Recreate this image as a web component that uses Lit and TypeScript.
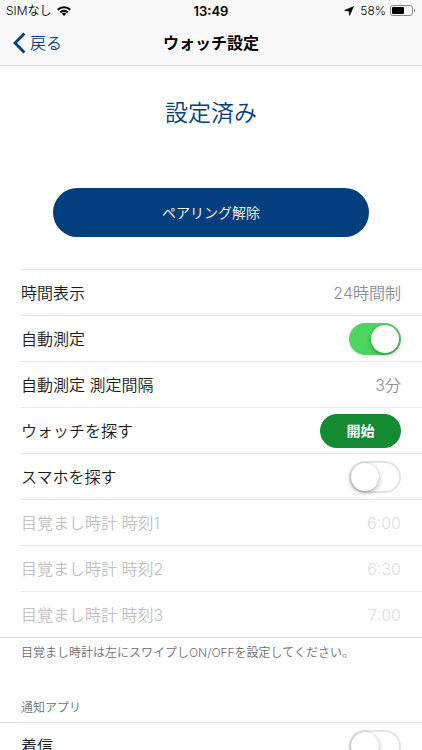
import { LitElement, html, css, nothing } from "lit";
import { customElement, property } from "lit/decorators.js";

@customElement("status-bar")
export class StatusBar extends LitElement {
  static styles = css`
    :host {
      display: grid;
      grid-template-columns: 1fr auto 1fr;
      align-items: center;
      height: 21px;
      padding: 0 6px;
      font-size: 12px;
      line-height: 20px;
    }
    .left,
    .right {
      display: flex;
      align-items: center;
      gap: 5px;
    }
    .right {
      justify-content: flex-end;
      gap: 4px;
    }
    .time {
      font-weight: 600;
      font-size: 13px;
    }
    .arrow {
      margin-right: 2px;
    }
    svg {
      display: block;
    }
  `;

  render() {
    return html`
      <div class="left">
        <span>SIMなし</span>
        <svg width="14" height="10" viewBox="0 0 14 10" aria-hidden="true">
          <g fill="none" stroke="#000" stroke-width="2.2">
            <path d="M0.8 3.8A8.8 8.8 0 0 1 13.2 3.8" />
            <path d="M3.2 6.4A5.3 5.3 0 0 1 10.8 6.4" />
          </g>
          <path d="M7 10L4.8 7.8A3.1 3.1 0 0 1 9.2 7.8Z" />
        </svg>
      </div>
      <span class="time">13:49</span>
      <div class="right">
        <svg class="arrow" width="10" height="10" viewBox="0 0 10 10" aria-hidden="true">
          <path d="M9.5 0.5L5.6 9.5L5 5L0.5 4.4Z" stroke="#000" stroke-width="0.6" stroke-linejoin="round" />
        </svg>
        <span>58%</span>
        <svg width="26" height="12" viewBox="0 0 26 12" aria-hidden="true">
          <rect x="0.5" y="0.5" width="22" height="10" rx="2.5" fill="none" stroke="#8a8a8a" />
          <rect x="2" y="2" width="12" height="7" rx="1" />
          <path d="M24 3.8v3.6c1.7 -0.8 1.7 -2.8 0 -3.6z" fill="#8a8a8a" />
        </svg>
      </div>
    `;
  }
}

@customElement("setting-row")
export class SettingRow extends LitElement {
  @property() label = "";
  @property() value = "";
  @property() action = "";
  @property({ type: Boolean }) toggle = false;
  @property({ type: Boolean }) on = false;
  @property({ type: Boolean }) muted = false;

  static styles = css`
    :host {
      display: block;
    }
    .row {
      display: flex;
      align-items: center;
      justify-content: space-between;
      box-sizing: border-box;
      height: 46px;
      padding-right: 21px;
      border-top: 1px solid #e6e6e8;
      font-size: 16px;
      line-height: 24px;
      color: #1a1a1a;
    }
    .value {
      color: #8e8e93;
    }
    .muted {
      color: #bfbfbf;
    }
    .muted .value {
      color: #dcdce0;
    }
    .switch {
      appearance: none;
      box-sizing: border-box;
      display: flex;
      width: 52px;
      height: 32px;
      margin: 0;
      padding: 0;
      border: 2px solid #e3e3e3;
      border-radius: 16px;
      background: #fff;
    }
    .switch::before {
      content: "";
      width: 28px;
      height: 28px;
      border-radius: 50%;
      background: #fff;
      box-shadow: 0 2px 5px rgba(0, 0, 0, 0.3), 0 0 1px rgba(0, 0, 0, 0.25);
    }
    .switch:checked {
      justify-content: flex-end;
      border-color: #4cd561;
      background: #4cd561;
    }
    .action {
      width: 81px;
      height: 34px;
      padding: 0;
      border: 0;
      border-radius: 17px;
      background: #148a33;
      color: #fff;
      font: inherit;
      font-size: 14px;
      font-weight: 700;
    }
  `;

  render() {
    return html`
      <div class="row ${this.muted ? "muted" : ""}">
        <label for="control">${this.label}</label>
        ${this.toggle
          ? html`<input id="control" class="switch" type="checkbox" role="switch" .checked=${this.on} />`
          : nothing}
        ${this.action ? html`<button id="control" class="action">${this.action}</button>` : nothing}
        ${this.value ? html`<output id="control" class="value">${this.value}</output>` : nothing}
      </div>
    `;
  }
}

interface Setting {
  label: string;
  value?: string;
  action?: string;
  toggle?: boolean;
  on?: boolean;
  muted?: boolean;
}

const SETTINGS: Setting[] = [
  { label: "時間表示", value: "24時間制" },
  { label: "自動測定", toggle: true, on: true },
  { label: "自動測定 測定間隔", value: "3分" },
  { label: "ウォッチを探す", action: "開始" },
  { label: "スマホを探す", toggle: true },
  { label: "目覚まし時計 時刻1", value: "6:00", muted: true },
  { label: "目覚まし時計 時刻2", value: "6:30", muted: true },
  { label: "目覚まし時計 時刻3", value: "7:00", muted: true },
];

@customElement("app-root")
export class AppRoot extends LitElement {
  static styles = css`
    :host {
      display: block;
      background: #fff;
      color: #000;
      font-family: Inter, "Noto Sans CJK JP", sans-serif;
      font-weight: 350;
    }
    .top {
      background: #f9f9f9;
      border-bottom: 1px solid #dcdcdc;
    }
    .nav {
      display: grid;
      grid-template-columns: 1fr auto 1fr;
      align-items: center;
      height: 44px;
      padding: 0 13px;
      line-height: 24px;
    }
    .back {
      display: flex;
      align-items: center;
      gap: 4px;
      color: #033f7e;
      font-size: 16px;
      text-decoration: none;
    }
    .title {
      margin: 0;
      font-size: 16px;
      font-weight: 700;
    }
    .state {
      margin: 0;
      padding-top: 30px;
      color: #033f7e;
      font-size: 23px;
      line-height: 34px;
      text-align: center;
    }
    .unpair {
      display: block;
      width: calc(100% - 106px);
      height: 49px;
      margin: 58px auto 32px;
      padding: 0 0 2px;
      border: 0;
      border-radius: 25px;
      background: #033f7e;
      color: #fff;
      font: inherit;
      font-size: 14px;
    }
    .list {
      padding-left: 21px;
    }
    .note,
    .group {
      margin: 0;
      padding: 0 21px;
      color: #6d6d72;
      font-size: 12px;
      line-height: 18px;
    }
    .note {
      padding-top: 6px;
      border-top: 1px solid #e0e0e2;
    }
    .group {
      padding-top: 37px;
      padding-bottom: 5px;
      font-weight: inherit;
    }
    .list-full {
      border-top: 1px solid #e0e0e2;
    }
    .list-full setting-row {
      margin-top: -1px;
      padding-left: 21px;
    }
  `;

  render() {
    return html`
      <header class="top">
        <status-bar></status-bar>
        <nav class="nav">
          <a class="back" href="#">
            <svg width="13" height="22" viewBox="0 0 13 22" aria-hidden="true">
              <path d="M11.4 1.4L2 11L11.4 20.6" fill="none" stroke="#033f7e" stroke-width="2.8" />
            </svg>
            <span>戻る</span>
          </a>
          <h1 class="title">ウォッチ設定</h1>
        </nav>
      </header>
      <main>
        <p class="state">設定済み</p>
        <button class="unpair">ペアリング解除</button>
        <section class="list">
          ${SETTINGS.map(
            (s) => html`<setting-row
              .label=${s.label}
              .value=${s.value ?? ""}
              .action=${s.action ?? ""}
              .toggle=${s.toggle ?? false}
              .on=${s.on ?? false}
              .muted=${s.muted ?? false}
            ></setting-row>`
          )}
        </section>
        <p class="note">目覚まし時計は左にスワイプしON/OFFを設定してください。</p>
        <h2 class="group">通知アプリ</h2>
        <section class="list-full">
          <setting-row label="着信" toggle></setting-row>
        </section>
      </main>
    `;
  }
}
